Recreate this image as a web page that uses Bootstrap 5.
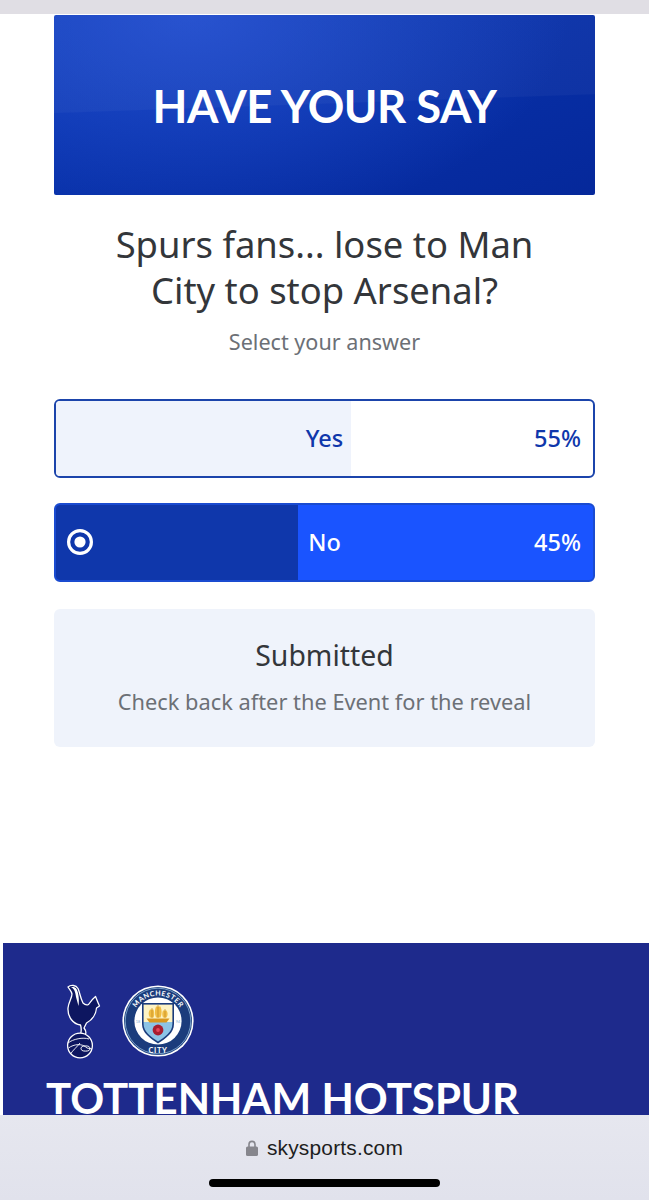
<!DOCTYPE html>
<html lang="en">
<head>
<meta charset="utf-8">
<title>Have your say</title>
<link rel="stylesheet" href="https://cdn.jsdelivr.net/npm/bootstrap@5.3.0/dist/css/bootstrap.min.css">
<style>
html,body{height:1200px;overflow:hidden;background:#fff}
body{font-family:"Noto Sans","Liberation Sans",sans-serif;color:#33363a}
.shot{height:1200px}
.topstrip{height:14px;background:#e0dee4;flex:none}
.pollwrap{padding:1px 54px 0 54px;flex:none}
.banner{height:180px;border-radius:2px;color:#fff;font-family:Lato,sans-serif;font-weight:700;font-size:45.4px;letter-spacing:-.5px;padding-top:2px;
 background:linear-gradient(178deg,rgba(255,255,255,.035) 0 49%,rgba(255,255,255,0) 49.6%),radial-gradient(ellipse 70% 120% at 25% 0,rgba(40,85,215,.75),rgba(40,85,215,0) 100%),linear-gradient(160deg,#0a37b4,#05289a)}
.polltitle{font-size:36.4px;line-height:46px;font-weight:400;margin:26px 0 0;color:#33363a}
.pollsub{font-size:21.6px;line-height:28px;color:#6c7076;margin:15px 0 0}
.opts{margin-top:43px;gap:25px}
.opt{height:79px;border:2px solid #1b44ab;border-radius:6px;font-size:23.5px;font-weight:500;overflow:hidden;padding:0 12px}
.opt-plain{color:#0f37ab;background:#fff}
.opt-on{color:#fff;background:#1a54ff;border-color:#1a4bd0}
.fillbar{left:0;top:0;bottom:0}
.opt-plain .fillbar{background:#eff3fc}
.opt-on .fillbar{background:#0f37ab}
.optlabel{z-index:1;left:0;right:0;top:0;bottom:0}
.optpct{z-index:1}
.radio{left:10px;top:23px;z-index:1}
.notice{margin-top:27px;height:138px;background:#eff3fb;border-radius:6px;padding-bottom:2px}
.notice-h{font-size:28.4px;line-height:34px;color:#33363a;margin:0 0 16px}
.notice-p{font-size:21.8px;line-height:28px;color:#6c7076;margin:0}
.spacer{flex:1 1 auto}
.hero{margin-left:3px;height:172px;background:#1e2a8c;overflow:hidden;flex:none;padding:40px 0 0 43px}
.herologos{gap:21px;height:76px;padding-left:19px}
.hero-name{font-family:Lato,sans-serif;font-weight:700;font-size:42px;line-height:50px;color:#fff;margin:14px 0 0;white-space:nowrap}
.addrbar{height:85px;flex:none;background:linear-gradient(180deg,#e6e7ef,#e1e2ec)}
.addr{margin-top:20px;gap:9px;font-size:20.9px;line-height:26px;color:#1d1d20;font-family:"Liberation Sans",sans-serif;letter-spacing:.2px}
.homebar{width:231px;height:8px;background:#000;border-radius:4px;margin-top:18px}
</style>
</head>
<body>
<div class="shot d-flex flex-column">
  <div class="topstrip"></div>
  <div class="pollwrap">
    <div class="banner d-flex align-items-center justify-content-center">HAVE YOUR SAY</div>
    <h1 class="polltitle text-center">Spurs fans... lose to Man<br>City to stop Arsenal?</h1>
    <p class="pollsub text-center">Select your answer</p>
    <div class="opts d-flex flex-column">
      <div class="opt opt-plain position-relative d-flex align-items-center justify-content-end">
        <div class="fillbar position-absolute" style="width:55%"></div>
        <div class="optlabel position-absolute d-flex align-items-center justify-content-center">Yes</div>
        <div class="optpct position-relative">55%</div>
      </div>
      <div class="opt opt-on position-relative d-flex align-items-center justify-content-end">
        <div class="fillbar position-absolute" style="width:45%"></div>
        <svg class="radio position-absolute" width="28" height="28" viewBox="0 0 28 28" aria-hidden="true"><circle cx="14" cy="14" r="11.4" fill="none" stroke="#fff" stroke-width="3.2"/><circle cx="14" cy="14" r="5.6" fill="#fff"/></svg>
        <div class="optlabel position-absolute d-flex align-items-center justify-content-center">No</div>
        <div class="optpct position-relative">45%</div>
      </div>
    </div>
    <div class="notice d-flex flex-column align-items-center justify-content-center text-center">
      <h2 class="notice-h fw-normal">Submitted</h2>
      <p class="notice-p">Check back after the Event for the reveal</p>
    </div>
  </div>
  <div class="spacer"></div>
  <div class="hero">
    <div class="herologos d-flex align-items-center">
      <svg width="36" height="76" viewBox="0 0 36 76" aria-hidden="true">
        <path d="M3 4C6 1.5 11 2 13 5.5C15 10 15 14 18 20C20 22 21.5 22.5 23.5 21.5C25.5 18.5 28 15.5 30.5 13.5C31.5 16 33 20 34.5 23L31.5 25C31 31 27 37 21.5 40L19 45C20.5 47 21.5 49 20.5 51L17.5 53L15.5 51C16.5 48 16.5 45 15.5 42C8 41 2.5 34 3 25C3.5 19 7 15 7 11C6.5 8.5 4.5 6.5 3 4Z" fill="#0d1660" stroke="#fff" stroke-width="1.3" stroke-linejoin="round"/>
        <path d="M6 4.5C9 5 10.5 9 11 14L13.5 23C14.5 17 13.5 9.5 11.5 6C10 4 8 3.5 6 4.5Z" fill="#fff"/>
        <circle cx="15" cy="62.5" r="12.4" fill="#0d1660" stroke="#fff" stroke-width="1.3"/>
        <path d="M3 60C8 56 18 54 24 56M3.5 65C9 61 17 60 22 65L27 66M5.5 71C8 67 12 64 15 60" fill="none" stroke="#fff" stroke-width=".9"/>
        <ellipse cx="20.5" cy="65.5" rx="4.5" ry="2.6" fill="none" stroke="#fff" stroke-width="1"/>
      </svg>
      <svg width="72" height="72" viewBox="-36 -36 72 72" role="img">
        <title>Manchester City</title>
        <circle r="35.6" fill="#fff"/>
        <circle r="34" fill="#1b3c7c"/>
        <circle r="32.8" fill="none" stroke="#9ec8e6" stroke-width=".7"/>
        <circle r="23.6" fill="#fff"/>
        <defs>
          <path id="arcTop" d="M-25.5 -4A25.9 25.9 0 0 1 25.5 -4"/>
        </defs>
        <text font-family="Lato,sans-serif" font-weight="700" font-size="7" fill="#fff" letter-spacing=".5"><textPath href="#arcTop" startOffset="50%" text-anchor="middle">MANCHESTER</textPath></text>
        <text font-family="Lato,sans-serif" font-weight="700" font-size="7.5" fill="#fff" letter-spacing=".6" text-anchor="middle" x="0" y="31.5">CITY</text>
        <text font-family="Lato,sans-serif" font-size="3.8" fill="#7fb2d8" text-anchor="middle" x="-20" y="2">18</text>
        <text font-family="Lato,sans-serif" font-size="3.8" fill="#7fb2d8" text-anchor="middle" x="20" y="2">94</text>
        <path d="M-16-18H16V3C16 12 8 17 0 22.5C-8 17-16 12-16 3Z" fill="#1b3c7c"/>
        <path d="M-14.4-16.4H14.4V1H-14.4Z" fill="#fdf3c4"/>
        <path d="M-14.4 1H14.4V3C14.4 11 7 16 0 20.5C-7 16-14.4 11-14.4 3Z" fill="#8cc4e6"/>
        <path d="M-11.5-2.5H11.5L8.5 1.5H-8.5Z" fill="#d9981f"/>
        <path d="M-8-3.5C-10-7-9.5-9-8-11.5L-4.5-11.5C-3.5-8-3.5-6-4.5-3.5ZM-2-3.5C-3.5-7-3.5-11-2-14.5H2.5C4-11 4-7 2.5-3.5ZM5-3.5C4-6 4-8 5-10.5H8.5C10-8 10-6 8.5-3.5Z" fill="#f0bd45"/>
        <path d="M-6-3V-13M0-3V-16M7-3V-12" stroke="#b97d15" stroke-width=".6"/>
        <circle cy="9" r="5.4" fill="#a81e2f"/>
        <circle cy="9" r="1.9" fill="#e8455a"/>
      </svg>
    </div>
    <div class="hero-name">TOTTENHAM HOTSPUR</div>
  </div>
  <div class="addrbar d-flex flex-column align-items-center">
    <div class="addr d-flex align-items-center">
      <svg width="12" height="16" viewBox="0 0 12 16" aria-hidden="true"><path d="M3 7V4.4a3 3 0 0 1 6 0V7" fill="none" stroke="#86868d" stroke-width="1.6"/><rect y="6.4" width="12" height="9.6" rx="1.6" fill="#86868d"/></svg>
      <span>skysports.com</span>
    </div>
    <div class="homebar"></div>
  </div>
</div>
</body>
</html>
